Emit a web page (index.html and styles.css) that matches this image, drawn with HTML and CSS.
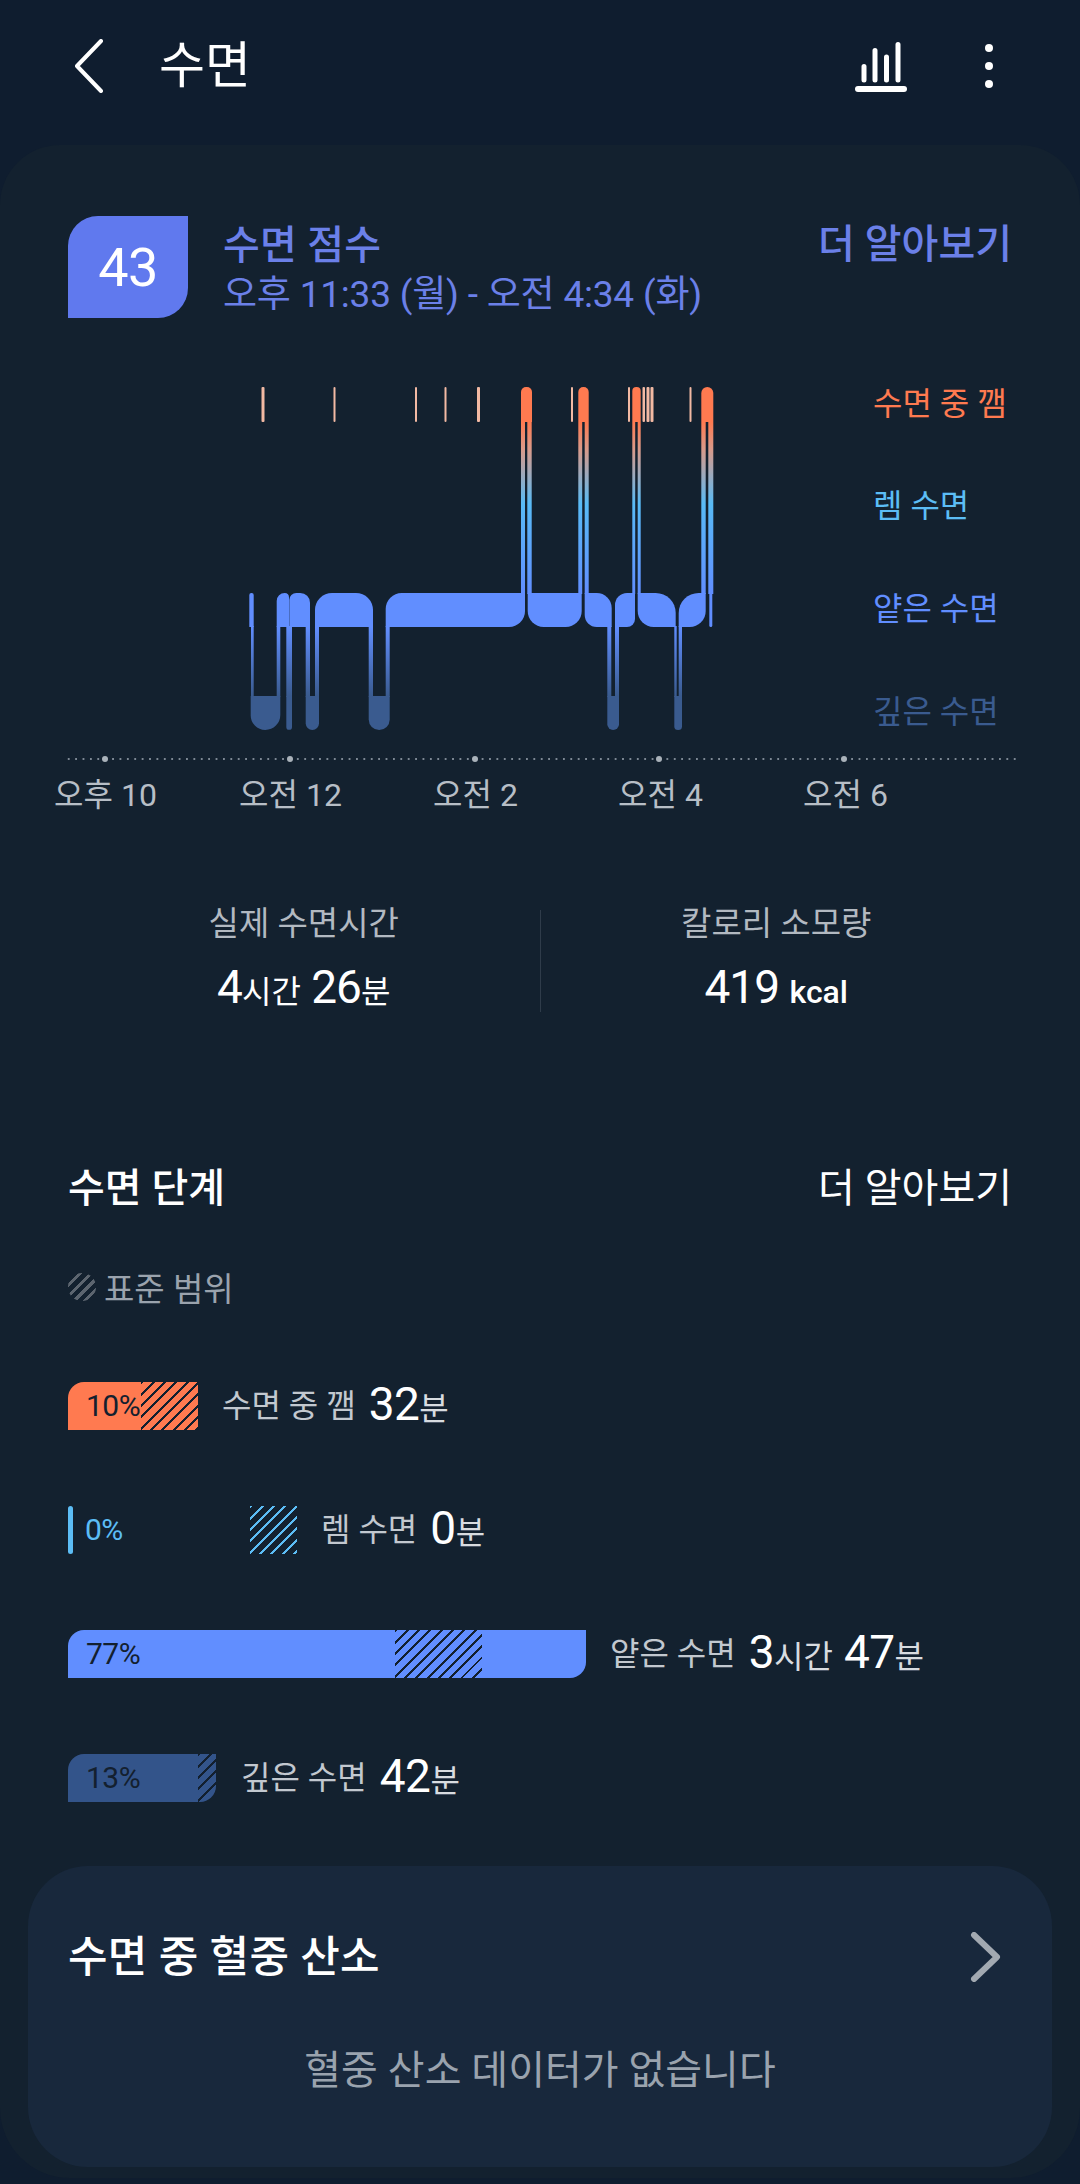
FILE: index.html
```html
<!DOCTYPE html>
<html lang="ko">
<head>
<meta charset="utf-8">
<title>수면</title>
<link rel="stylesheet" href="styles.css">
</head>
<body>
<div class="page">
  <header class="topbar">
    <svg class="back" width="32" height="54" viewBox="0 0 32 54"><path d="M28 2 4 27l24 25" fill="none" stroke="#fff" stroke-width="4" stroke-linecap="round" stroke-linejoin="round"/></svg>
    <h1 class="title">수면</h1>
    <svg class="chart-icon" width="52" height="54" viewBox="0 0 52 54"><g stroke="#fff" stroke-linecap="round"><path d="M9 27.500V41M20 11.500V41M31.500 18V41M43 5.500V41" stroke-width="5"/><path d="M3 50h46" stroke-width="6"/></g></svg>
    <svg class="more-icon" width="10" height="46" viewBox="0 0 10 46"><g fill="#fff"><circle cx="5" cy="5" r="4"/><circle cx="5" cy="23" r="4"/><circle cx="5" cy="41" r="4"/></g></svg>
  </header>

  <main class="sheet">
    <section class="score">
      <div class="badge">43</div>
      <div class="score-text">
        <div class="score-title">수면 점수</div>
        <div class="score-time">오후 11:33 (월) - 오전 4:34 (화)</div>
      </div>
      <a class="more more-blue">더 알아보기</a>
    </section>

    <section class="graph">
      <svg class="graph-svg" width="1080" height="420" viewBox="0 370 1080 420">
        <defs>
          <linearGradient id="wakeToLight" gradientUnits="userSpaceOnUse" x1="0" y1="422" x2="0" y2="593">
            <stop offset="0" stop-color="#ff7a50"/>
            <stop offset="0.16" stop-color="#d99a8a"/>
            <stop offset="0.48" stop-color="#58bbf6"/>
            <stop offset="1" stop-color="#618eff"/>
          </linearGradient>
          <linearGradient id="lightToDeep" gradientUnits="userSpaceOnUse" x1="0" y1="627" x2="0" y2="696">
            <stop offset="0" stop-color="#618eff"/>
            <stop offset="1" stop-color="#3a5b8f"/>
          </linearGradient>
        </defs>

        <g fill="#f2b9a3">
          <rect x="261.500" y="387" width="3" height="35" rx="1"/>
          <rect x="333.500" y="387" width="2" height="35" rx="1"/>
          <rect x="415" y="387" width="2" height="35" rx="1"/>
          <rect x="444.500" y="387" width="2" height="35" rx="1"/>
          <rect x="477" y="387" width="3" height="35" rx="1"/>
          <rect x="571" y="387" width="2" height="35" rx="1"/>
          <rect x="628" y="387" width="2" height="35" rx="1"/>
          <rect x="642.500" y="387" width="2.500" height="35" rx="1"/>
          <rect x="646.500" y="387" width="3" height="35" rx="1"/>
          <rect x="650.500" y="387" width="3" height="35" rx="1"/>
          <rect x="689.500" y="387" width="2" height="35" rx="1"/>
        </g>

        <g fill="#ff7a50">
          <path d="M521 422v-30a5 5 0 0 1 5-5h1a5 5 0 0 1 5 5v30z"/>
          <path d="M578.300 422v-30a5 5 0 0 1 5-5h.4a5 5 0 0 1 5 5v30z"/>
          <path d="M632.300 422v-31a4 4 0 0 1 4-4h.4a4 4 0 0 1 4 4v31z"/>
          <path d="M701.300 422v-29a6 6 0 0 1 6-6a6 6 0 0 1 6 6v29z"/>
        </g>

        <g fill="url(#wakeToLight)">
          <path d="M521 422h4v172h-4zM527.300 422h4.400v172h-4.400z"/>
          <path d="M578.300 422h3.900v172h-3.900zM584.700 422h4v172h-4z"/>
          <path d="M632.300 422h2.900v172h-2.900zM637.700 422h3v172h-3z"/>
          <path d="M701.300 422h4.400v172h-4.400zM708.300 422h5v172h-5z"/>
        </g>

        <g fill="url(#lightToDeep)">
          <path d="M251 626h2.700v71h-2.700z"/>
          <path d="M276.700 626h3.600v71h-3.600z"/>
          <path d="M286.300 626h5.700v71h-5.700z"/>
          <path d="M305.700 626h4.300v71h-4.300z"/>
          <path d="M315 626h4v71h-4z"/>
          <path d="M368.700 626h4.300v71h-4.300z"/>
          <path d="M385.700 626h4v71h-4z"/>
          <path d="M607.300 626h4v71h-4zM615 626h4v71h-4z"/>
          <path d="M674.300 626h2.400v71h-2.400zM678.700 626h3.300v71h-3.300z"/>
        </g>

        <g fill="#3a5b8f">
          <path d="M250.700 696h29.600v19a15 15 0 0 1-15 15a14.600 14.600 0 0 1-14.600-15z"/>
          <path d="M286.300 696h5.700v31a2.850 2.850 0 0 1-5.700 0z"/>
          <path d="M305.700 696h13.300v27.300a6.650 6.650 0 0 1-13.300 0z"/>
          <path d="M368.700 696h21v23.500a10.500 10.500 0 0 1-21 0z"/>
          <path d="M607.300 696h11.700v28.200a5.850 5.850 0 0 1-11.700 0z"/>
          <path d="M674.300 696h7.700v30.200a3.850 3.850 0 0 1-7.700 0z"/>
        </g>

        <g fill="#618eff">
          <path d="M249.300 595a2 2 0 0 1 2-2h.4a2 2 0 0 1 2 2v32h-4.400z"/>
          <path d="M276.700 627v-26a8 8 0 0 1 8-8a4.500 4.500 0 0 1 4.300 4.500v29.500z"/>
          <path d="M289.300 627v-27a7 7 0 0 1 7-7h4a9.700 9.700 0 0 1 9.700 9.700v24.300z"/>
          <path d="M315 627v-17a17 17 0 0 1 17-17h24a17 17 0 0 1 17 17v17z"/>
          <path d="M385.700 627v-18a16 16 0 0 1 16-16h123.300v18a16 16 0 0 1-16 16z"/>
          <path d="M527.700 593h54v18a16 16 0 0 1-16 16h-22a16 16 0 0 1-16-16z"/>
          <path d="M584.700 593h12a15 15 0 0 1 15 15v19h-15a12 12 0 0 1-12-12z"/>
          <path d="M615 605a12 12 0 0 1 12-12h8v26a8 8 0 0 1-8 8h-12z"/>
          <path d="M637.700 593h18a20 20 0 0 1 20 20v14h-22a16 16 0 0 1-16-16z"/>
          <path d="M678.700 613a20 20 0 0 1 20-20h7v18a16 16 0 0 1-16 16h-11z"/>
          <path d="M709.300 593h3v32.500a1.500 1.500 0 0 1-3 0z"/>
        </g>
      </svg>
      <div class="stage-labels">
        <span class="stage stage-wake">수면 중 깸</span>
        <span class="stage stage-rem">렘 수면</span>
        <span class="stage stage-light">얕은 수면</span>
        <span class="stage stage-deep">깊은 수면</span>
      </div>
    </section>

    <div class="axis">
      <div class="axis-line">
        <i class="tick"></i><i class="tick"></i><i class="tick"></i><i class="tick"></i><i class="tick"></i>
      </div>
      <div class="axis-labels">
        <span>오후 10</span><span>오전 12</span><span>오전 2</span><span>오전 4</span><span>오전 6</span>
      </div>
    </div>

    <section class="stats">
      <div class="stat">
        <div class="stat-label">실제 수면시간</div>
        <div class="stat-value"><b>4</b><small>시간</small> <b>26</b><small>분</small></div>
      </div>
      <div class="stat-divider"></div>
      <div class="stat">
        <div class="stat-label">칼로리 소모량</div>
        <div class="stat-value"><b>419</b> <small class="kcal">kcal</small></div>
      </div>
    </section>

    <section class="stages">
      <div class="stages-head">
        <h2 class="stages-title">수면 단계</h2>
        <a class="more">더 알아보기</a>
      </div>
      <div class="legend"><i class="legend-dot"></i>표준 범위</div>

      <div class="row">
        <div class="bar bar-wake"><span class="pct">10%</span><i class="hatch hatch-wake"></i></div>
        <span class="row-label">수면 중 깸</span>
        <span class="row-value"><b>32</b><small>분</small></span>
      </div>
      <div class="row">
        <div class="bar bar-rem"><i class="rem-line"></i><span class="pct pct-rem">0%</span><i class="hatch hatch-rem"></i></div>
        <span class="row-label">렘 수면</span>
        <span class="row-value"><b>0</b><small>분</small></span>
      </div>
      <div class="row">
        <div class="bar bar-light"><span class="pct">77%</span><i class="hatch hatch-light"></i></div>
        <span class="row-label">얕은 수면</span>
        <span class="row-value"><b>3</b><small>시간</small> <b>47</b><small>분</small></span>
      </div>
      <div class="row">
        <div class="bar bar-deep"><span class="pct">13%</span><i class="hatch hatch-deep"></i></div>
        <span class="row-label">깊은 수면</span>
        <span class="row-value"><b>42</b><small>분</small></span>
      </div>
    </section>

    <section class="oxygen">
      <div class="oxygen-head">
        <h2 class="oxygen-title">수면 중 혈중 산소</h2>
        <svg width="32" height="50" viewBox="0 0 32 50"><path d="M4 3 27 25 4 47" fill="none" stroke="#a2a9b1" stroke-width="6" stroke-linecap="round" stroke-linejoin="round"/></svg>
      </div>
      <p class="oxygen-empty">혈중 산소 데이터가 없습니다</p>
    </section>
  </main>
</div>
</body>
</html>
```
FILE: styles.css
```css
* { box-sizing: border-box; }
html, body { margin: 0; padding: 0; }
body {
  width: 1080px;
  height: 2184px;
  overflow: hidden;
  background: #0f1d2f;
  font-family: "Roboto", "Noto Sans CJK KR", sans-serif;
  color: #fff;
}
.page { width: 1080px; height: 2184px; display: flex; flex-direction: column; padding-bottom: 6px; }

.topbar { height: 145px; display: flex; align-items: center; padding: 0 86px 13px 73px; flex: none; }
.back { flex: none; }
.title { margin: 0 0 0 54px; font-size: 50px; font-weight: 400; line-height: 1; flex: 1; }
.chart-icon { flex: none; margin-right: 77px; }
.more-icon { flex: none; }

.sheet {
  flex: 1;
  background: #13212f;
  border-radius: 60px 60px 70px 70px;
  display: flex;
  flex-direction: column;
  padding-top: 71px;
}

.score { display: flex; padding: 0 68px; height: 102px; }
.badge {
  width: 120px; height: 102px;
  background: #6079ee;
  border-radius: 30px 0 30px 0;
  display: flex; align-items: center; justify-content: center;
  font-size: 54px; letter-spacing: -.5px; color: #fff; flex: none;
}
.score-text { margin-left: 35px; flex: 1; padding-top: 5px; }
.score-title { font-size: 40px; font-weight: 500; line-height: 50px; color: #6b80e8; letter-spacing: .2px; }
.score-time { font-size: 37px; line-height: 46px; color: #6b80e8; margin-top: 1px; white-space: nowrap; letter-spacing: -.2px; }
.more { font-size: 40px; line-height: 50px; color: #fff; white-space: nowrap; }
.more-blue { color: #6b80e8; font-weight: 500; padding-top: 4px; }

.graph { position: relative; height: 420px; margin-top: 52px; flex: none; }
.graph-svg { display: block; }
.stage-labels { position: absolute; inset: 0; }
.stage { position: absolute; left: 873px; font-size: 32px; line-height: 40px; white-space: nowrap; }
.stage-wake { top: 14px; color: #ff7a50; }
.stage-rem { top: 116px; color: #5cbdf5; }
.stage-light { top: 219px; color: #618eff; }
.stage-deep { top: 322px; color: #3a5b8f; }

.axis { flex: none; margin-top: -34px; }
.axis-line {
  height: 6px;
  margin-left: 65px;
  width: 952px;
  background: radial-gradient(circle, #7d8894 1.1px, transparent 1.3px) 0 0 / 7.400px 6px repeat-x;
  display: flex;
  padding-left: 37px;
  align-items: center;
  gap: 178.800px;
}
.tick { width: 6px; height: 6px; border-radius: 50%; background: #aab2ba; flex: none; }
.axis-labels { display: flex; margin-left: 13px; margin-top: 13px; }
.axis-labels span { width: 185px; text-align: center; font-size: 32px; line-height: 40px; color: #b7bec6; white-space: nowrap; }

.stats { display: flex; height: 104px; margin-top: 95px; padding: 0 68px; flex: none; }
.stat { flex: 1; text-align: center; margin-top: -6px; }
.stat-label { font-size: 33px; line-height: 40px; color: #b2b9c1; white-space: nowrap; }
.stat-value { font-size: 46px; line-height: 60px; margin-top: 13px; letter-spacing: -1px; white-space: nowrap; }
.stat-value b { font-weight: 400; }
.stat-value small { font-size: 32px; letter-spacing: 0; }
.stat-value .kcal { font-weight: 500; font-size: 32px; }
.stat-divider { width: 1px; height: 102px; background: #2f3c4a; flex: none; }

.stages { padding: 0 68px 0; flex: none; margin-top: 150px; }
.stages-head { display: flex; justify-content: space-between; align-items: center; height: 50px; }
.stages-title { margin: 0; font-size: 40px; font-weight: 500; line-height: 50px; }
.legend { display: flex; align-items: center; margin-top: 53px; height: 40px; font-size: 33px; color: #9aa3ad; gap: 8px; }
.legend-dot {
  width: 28px; height: 28px; border-radius: 50%; flex: none;
  background: repeating-linear-gradient(135deg, #5c656f 0 3px, transparent 3px 7.500px);
}

.row { display: flex; align-items: center; height: 48px; margin-bottom: 76px; }
.legend + .row { margin-top: 75px; }
.bar { position: relative; height: 48px; flex: none; display: flex; align-items: center; margin-right: 24px; }
.pct { position: relative; padding-left: 18px; font-size: 30px; color: #13202f; line-height: 1; letter-spacing: -.5px; }
.hatch { position: absolute; top: 0; bottom: 0; display: block; }
.bar-wake { width: 130px; background: #ff7a50; border-radius: 16px 0 0 0; }
.hatch-wake { left: 73px; right: 0; background: repeating-linear-gradient(135deg, #13202f 0 2px, transparent 2px 8px); }
.bar-rem { width: 229px; margin-right: 24px; }
.rem-line { position: absolute; left: 0; top: 0; width: 5px; height: 48px; background: #5cbdf5; border-radius: 3px; }
.pct-rem { color: #5cbdf5; padding-left: 17px; }
.hatch-rem { left: 182px; right: 0; background: repeating-linear-gradient(135deg, #5cbdf5 0 2px, transparent 2px 8px); }
.bar-light { width: 518px; background: #618eff; border-radius: 16px 0 16px 0; }
.hatch-light { left: 327px; width: 87px; background: repeating-linear-gradient(135deg, #13202f 0 2px, transparent 2px 8px); }
.bar-deep { width: 148px; background: #33548a; border-radius: 16px 0 16px 0; overflow: hidden; margin-right: 25px; }
.hatch-deep { left: 130px; right: 0; background: repeating-linear-gradient(135deg, #13202f 0 2px, transparent 2px 8px); }
.row-label { font-size: 32px; color: #c2c8cf; line-height: 48px; margin-right: 13px; white-space: nowrap; }
.row-value { font-size: 46px; line-height: 48px; white-space: nowrap; letter-spacing: -.5px; }
.row-value b { font-weight: 400; }
.row-value small { font-size: 32px; color: #d8dce0; letter-spacing: 0; }

.oxygen {
  flex: none;
  margin: -12px 28px 0;
  height: 301px;
  background: #18283c;
  border-radius: 60px;
  padding: 63px 50px 0 40px;
}
.oxygen-head { display: flex; justify-content: space-between; align-items: center; height: 56px; }
.oxygen-title { margin: 0; font-size: 43px; font-weight: 500; line-height: 56px; white-space: nowrap; letter-spacing: .3px; }
.oxygen-empty { margin: 61px 0 0; text-align: center; font-size: 40px; color: #9aa3ae; line-height: 50px; padding-left: 10px; white-space: nowrap; }
```
